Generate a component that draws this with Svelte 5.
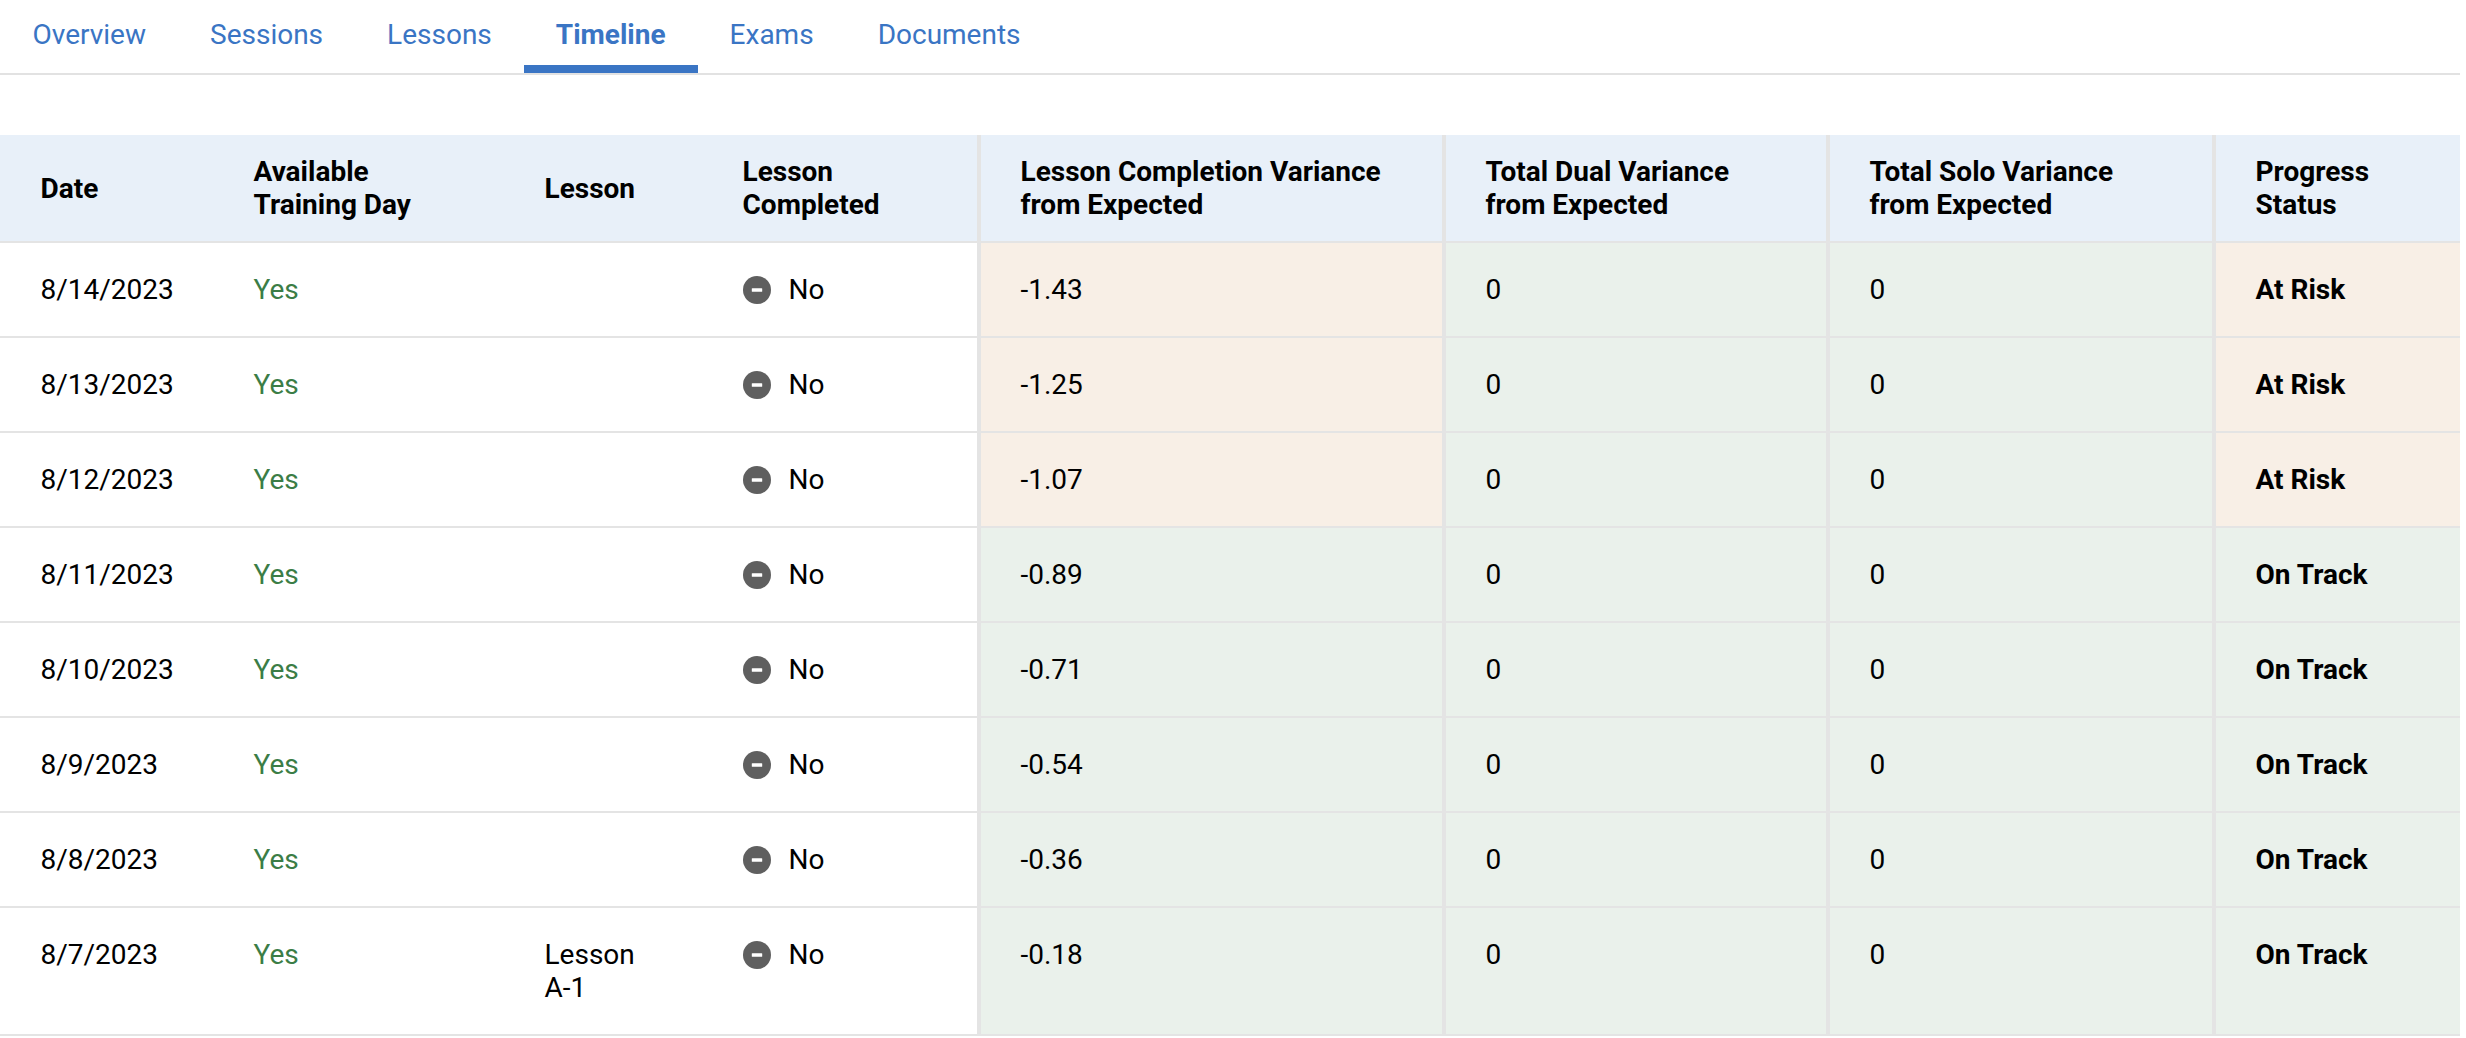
<script>
  const tabs = ['Overview', 'Sessions', 'Lessons', 'Timeline', 'Exams', 'Documents'];
  const heads = [
    ['Date'],
    ['Available', 'Training Day'],
    ['Lesson'],
    ['Lesson', 'Completed'],
    ['Lesson Completion Variance', 'from Expected'],
    ['Total Dual Variance', 'from Expected'],
    ['Total Solo Variance', 'from Expected'],
    ['Progress', 'Status']
  ];
  const rows = [
    { date: '8/14/2023', v: '-1.43', status: 'At Risk' },
    { date: '8/13/2023', v: '-1.25', status: 'At Risk' },
    { date: '8/12/2023', v: '-1.07', status: 'At Risk' },
    { date: '8/11/2023', v: '-0.89', status: 'On Track' },
    { date: '8/10/2023', v: '-0.71', status: 'On Track' },
    { date: '8/9/2023', v: '-0.54', status: 'On Track' },
    { date: '8/8/2023', v: '-0.36', status: 'On Track' },
    { date: '8/7/2023', v: '-0.18', status: 'On Track', lesson: ['Lesson', 'A-1'] }
  ];
  const tone = (s) => (s === 'At Risk' ? 'risk' : 'track');
</script>

<div class="page">
  <nav class="tabs">
    {#each tabs as t}
      <a class="tab" class:active={t === 'Timeline'} href="#{t}">{t}</a>
    {/each}
  </nav>

  <table>
    <colgroup>
      <col class="c1" /><col class="c2" /><col class="c3" /><col class="c4" />
      <col class="c5" /><col class="c6" /><col class="c7" /><col class="c8" />
    </colgroup>
    <thead>
      <tr>
        {#each heads as h, i}
          <th class:sep={i >= 4}>
            {#each h as line}<div>{line}</div>{/each}
          </th>
        {/each}
      </tr>
    </thead>
    <tbody>
      {#each rows as r}
        <tr>
          <td>{r.date}</td>
          <td class="yes">Yes</td>
          <td>
            {#if r.lesson}{#each r.lesson as l}<div>{l}</div>{/each}{/if}
          </td>
          <td>
            <span class="done">
              <svg viewBox="0 0 28 28" width="28" height="28" aria-hidden="true">
                <circle cx="14" cy="14" r="14" fill="#5f5f5f" />
                <rect x="8.8" y="12.2" width="10.4" height="3.6" rx="0.6" fill="#fff" />
              </svg>
              No
            </span>
          </td>
          <td class="sep {tone(r.status)}">{r.v}</td>
          <td class="sep track">0</td>
          <td class="sep track">0</td>
          <td class="sep strong {tone(r.status)}">{r.status}</td>
        </tr>
      {/each}
    </tbody>
  </table>
</div>

<style>
  :global(body) {
    margin: 0;
    background: #fff;
  }
  .page {
    width: 2460px;
    font-family: Roboto, "Liberation Sans", sans-serif;
    font-size: 28px;
    line-height: 33px;
    color: #000;
  }
  .tabs {
    display: flex;
    height: 73px;
    padding-left: 0.5px;
    border-bottom: 2px solid #e2e2e2;
    margin-bottom: 60px;
  }
  .tab {
    box-sizing: border-box;
    height: 73px;
    padding: 18px 32px 0;
    color: #3a75c4;
    text-decoration: none;
  }
  .active {
    font-weight: 700;
    border-bottom: 8px solid #3a75c4;
  }
  table {
    width: 2460px;
    table-layout: fixed;
    border-collapse: separate;
    border-spacing: 0;
  }
  .c1 { width: 213px; }
  .c2 { width: 291px; }
  .c3 { width: 198px; }
  .c4 { width: 275px; }
  .c5 { width: 465px; }
  .c6 { width: 384px; }
  .c7 { width: 386px; }
  .c8 { width: 248px; }
  th {
    padding: 20px 20px 20px 40.5px;
    background: #e8f0f9;
    border-bottom: 2px solid #e4e4e4;
    text-align: left;
    vertical-align: middle;
    font-weight: 700;
  }
  td {
    padding: 30px 10px 30px 40.5px;
    border-bottom: 2px solid #e4e4e4;
    vertical-align: top;
  }
  .sep {
    padding-left: 39.5px;
    border-left: 4px solid #e4e4e4;
  }
  .yes { color: #3b7d46; }
  .done {
    display: flex;
    align-items: center;
    gap: 18px;
  }
  .risk { background: #f8efe6; }
  .track { background: #eaf1eb; }
  .strong { font-weight: 700; }
</style>
